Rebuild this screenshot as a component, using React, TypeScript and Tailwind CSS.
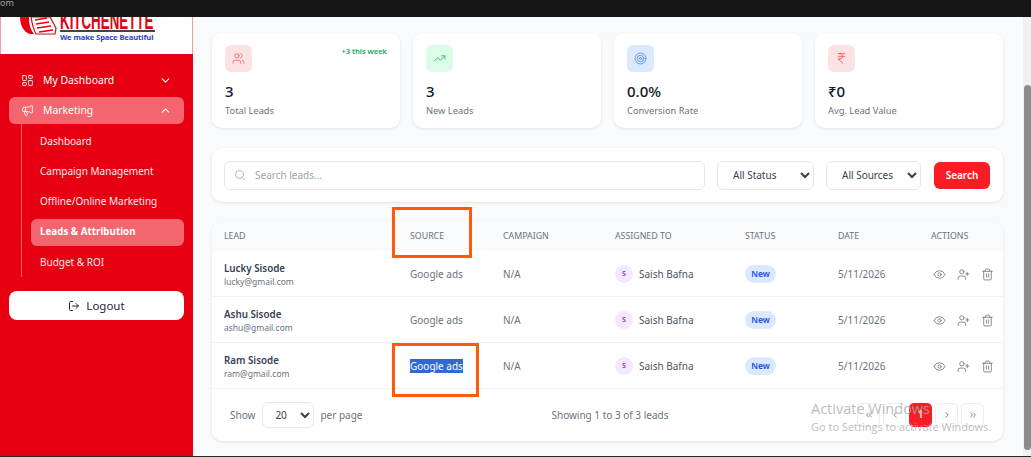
import React from 'react';
import {
  ChevronDown,
  ChevronLeft,
  ChevronRight,
  ChevronUp,
  ChevronsLeft,
  ChevronsRight,
  Eye,
  IndianRupee,
  LayoutDashboard,
  LogOut,
  Megaphone,
  Search,
  Target,
  Trash2,
  TrendingUp,
  UserPlus,
  Users,
} from 'lucide-react';

const leads = [
  { name: 'Lucky Sisode', email: 'lucky@gmail.com' },
  { name: 'Ashu Sisode', email: 'ashu@gmail.com' },
  { name: 'Ram Sisode', email: 'ram@gmail.com', selected: true },
];

const subItems = ['Dashboard', 'Campaign Management', 'Offline/Online Marketing', 'Leads & Attribution', 'Budget & ROI'];

const columns = 'grid grid-cols-[186px_93px_112px_130px_93px_93px_1fr] px-[12px]';

const Logo = () => (
  <div className="h-[37px] bg-white border-x border-[#e9a0a5] overflow-hidden relative">
    <svg width="38" height="18" viewBox="0 0 38 18" className="absolute left-[18px] top-0">
      <path d="M1 0 C1 7 4 15 11 17 L15 17 C11 12 10 6 10 0 Z" fill="#e60012" />
      <path d="M12 0 L31 0 L37 11 L36 17 L17 17 C14 12 13 6 12 0 Z" fill="#fff" stroke="#e60012" strokeWidth="1.2" />
      <path d="M16 3 L28 1 M17 7 L30 5 M18 11 L32 9 M20 15 L34 13" stroke="#e60012" strokeWidth="1.4" />
    </svg>
    <div className="absolute left-[59px] top-[-10px] w-[95px]">
      <span className="block origin-left scale-x-[.58] text-[23px] leading-[29px] font-bold text-[#e60012] whitespace-nowrap font-['Liberation_Sans',sans-serif]">
        KITCHENETTE
      </span>
    </div>
    <div className="absolute left-[59px] top-[13px] w-[95px] h-[2px] bg-[#444]" />
    <div className="absolute left-[59px] top-[14px] text-[7.6px] leading-[12px] font-bold text-[#2b3fc4] whitespace-nowrap tracking-[-0.1px]">
      We make Space Beautiful
    </div>
  </div>
);

const Sidebar = () => (
  <aside className="w-[193px] shrink-0 bg-[#e60012] text-white overflow-hidden">
    <Logo />
    <div className="px-[9px] pt-[10px]">
      <div className="h-[33px] flex items-center pl-[12px] pr-[12px] text-[10.4px]">
        <LayoutDashboard className="w-[13px] h-[13px] mr-[9px]" strokeWidth={1.6} />
        <span className="flex-1">My Dashboard</span>
        <ChevronDown className="w-[13px] h-[13px]" />
      </div>
      <div className="h-[27px] flex items-center pl-[12px] pr-[12px] text-[10.4px] bg-[#f3666f] rounded-[6px]">
        <Megaphone className="w-[13px] h-[13px] mr-[9px]" strokeWidth={1.6} />
        <span className="flex-1">Marketing</span>
        <ChevronUp className="w-[13px] h-[13px]" />
      </div>
      <div className="ml-[12px] border-l border-[#f3666f] pl-[9px]">
        <div className="flex flex-col pt-[2px]">
          {subItems.map((item) => (
            <div
              key={item}
              className={
                item === 'Leads & Attribution'
                  ? 'h-[27px] mt-[2.5px] mb-[1.5px] flex items-center pl-[9px] rounded-[6px] bg-[#f3666f] text-[9.8px] font-bold'
                  : 'h-[30px] flex items-center pl-[9px] text-[10px] text-[#ffe9ea]'
              }
            >
              {item}
            </div>
          ))}
        </div>
      </div>
      <button className="mt-[14px] w-[175px] h-[29px] rounded-[8px] bg-white text-[#1f2937] text-[11.5px] flex items-center justify-center gap-[6px]">
        <LogOut className="w-[12px] h-[12px]" />
        Logout
      </button>
    </div>
  </aside>
);

const StatCard = ({
  icon,
  tint,
  value,
  label,
  note,
}: {
  icon: React.ReactNode;
  tint: string;
  value: string;
  label: string;
  note?: string;
}) => (
  <div className="h-[95px] bg-white rounded-[10px] shadow-[0_1px_3px_rgba(0,0,0,0.1)] pl-[13px] pr-[13px] pt-[12px]">
    <div className="flex justify-between items-start">
      <div className={`w-[27px] h-[27px] rounded-[6px] flex items-center justify-center ${tint}`}>{icon}</div>
      {note && <span className="text-[7.5px] leading-[12px] font-semibold text-[#22a35b]">{note}</span>}
    </div>
    <div className="mt-[9px] text-[15px] leading-[20px] font-medium text-[#111827]">{value}</div>
    <div className="text-[9.3px] leading-[14px] mt-[3px] text-[#6b7280]">{label}</div>
  </div>
);

const Pager = ({ children, active }: { children: React.ReactNode; active?: boolean }) => (
  <div
    className={
      active
        ? 'w-[23px] h-[24px] rounded-[5px] bg-[#fb1c24] text-white text-[10px] font-semibold flex items-center justify-center'
        : 'w-[23px] h-[24px] rounded-[5px] border border-[#eceef1] text-[#6b7280] flex items-center justify-center'
    }
  >
    {children}
  </div>
);

const selectClass =
  'h-[29px] rounded-[6px] border border-[#e5e7eb] bg-white text-[10px] text-[#374151] pl-[11px] outline-none';

export default function App() {
  return (
    <div className="h-screen w-full flex flex-col overflow-hidden bg-[#161616] font-['Noto_Sans',sans-serif]">
      <div className="h-[17px] shrink-0 text-[#9ca3af] text-[9px] leading-[6px]">om</div>
      <div className="flex-1 flex min-h-0">
        <Sidebar />
        <main className="flex-1 bg-[#f8fafc] pl-[19px] pr-[20px] pt-[16px] overflow-hidden">
          <div className="grid grid-cols-4 gap-[13px]">
            <StatCard
              icon={<Users className="w-[13px] h-[13px] text-[#e2626a]" strokeWidth={1.5} />}
              tint="bg-[#fde2e3]"
              value="3"
              label="Total Leads"
              note="+3 this week"
            />
            <StatCard
              icon={<TrendingUp className="w-[13px] h-[13px] text-[#22b35f]" strokeWidth={1.5} />}
              tint="bg-[#dcfce7]"
              value="3"
              label="New Leads"
            />
            <StatCard
              icon={<Target className="w-[13px] h-[13px] text-[#4f8ae8]" strokeWidth={1.5} />}
              tint="bg-[#dbe9fe]"
              value="0.0%"
              label="Conversion Rate"
            />
            <StatCard
              icon={<IndianRupee className="w-[13px] h-[13px] text-[#e8505a]" strokeWidth={1.5} />}
              tint="bg-[#fde2e3]"
              value="₹0"
              label="Avg. Lead Value"
            />
          </div>

          <div className="mt-[20px] h-[54px] bg-white rounded-[10px] shadow-[0_1px_3px_rgba(0,0,0,0.1)] flex items-center pl-[12px] pr-[13px]">
            <div className="w-[481px] h-[29px] rounded-[6px] border border-[#e5e7eb] flex items-center pl-[9px] text-[10px] text-[#9ca3af]">
              <Search className="w-[12px] h-[12px] mr-[9px]" strokeWidth={1.6} />
              Search leads...
            </div>
            <select className={`${selectClass} w-[97px] ml-[12px]`} defaultValue="All Status">
              <option>All Status</option>
            </select>
            <select className={`${selectClass} w-[95px] ml-[12px]`} defaultValue="All Sources">
              <option>All Sources</option>
            </select>
            <button className="ml-[13px] w-[56px] h-[27px] rounded-[6px] bg-[#fb1c24] text-white text-[10px] font-semibold">
              Search
            </button>
          </div>

          <div className="mt-[19px] h-[220px] bg-white rounded-[10px] shadow-[0_1px_3px_rgba(0,0,0,0.1)] overflow-hidden">
            <div className={`${columns} h-[30px] items-center bg-[#f8fafb] text-[8.8px] text-[#6b7280] pt-[2px]`}>
              <span>LEAD</span>
              <span>SOURCE</span>
              <span>CAMPAIGN</span>
              <span>ASSIGNED TO</span>
              <span>STATUS</span>
              <span>DATE</span>
              <span>ACTIONS</span>
            </div>
            {leads.map((lead) => (
              <div key={lead.email} className={`${columns} h-[46px] items-center border-b border-[#f1f3f5] pt-[1px]`}>
                <div>
                  <div className="text-[9.8px] leading-[14px] mt-[1px] font-semibold text-[#374151]">{lead.name}</div>
                  <div className="text-[8.5px] leading-[13px] mt-[-1px] text-[#6b7280]">{lead.email}</div>
                </div>
                <div className="text-[10px] text-[#6b7280]">
                  <span className={lead.selected ? 'bg-[#3367d1] text-white' : ''}>Google ads</span>
                </div>
                <div className="text-[10px] text-[#6b7280]">N/A</div>
                <div className="flex items-center text-[10px] text-[#4b5563]">
                  <span className="w-[18px] h-[18px] rounded-full bg-[#f3e8ff] text-[#7e22ce] text-[7px] font-semibold flex items-center justify-center mr-[6px]">
                    S
                  </span>
                  Saish Bafna
                </div>
                <div className="flex items-center">
                  <span className="inline-flex items-center justify-center w-[31px] h-[18px] rounded-full bg-[#dbe9fe] text-[#1d4ed8] text-[8.5px] font-semibold">
                    New
                  </span>
                </div>
                <div className="text-[10px] text-[#6b7280]">5/11/2026</div>
                <div className="flex items-center gap-[11px] pl-[2px] text-[#6b7280]">
                  <Eye className="w-[13px] h-[13px]" strokeWidth={1.5} />
                  <UserPlus className="w-[13px] h-[13px]" strokeWidth={1.5} />
                  <Trash2 className="w-[13px] h-[13px]" strokeWidth={1.5} />
                </div>
              </div>
            ))}
            <div className="h-[52px] flex items-center pl-[18px] pr-[19px] text-[10px] text-[#6b7280]">
              <span>Show</span>
              <select className="ml-[7px] w-[52px] h-[26px] rounded-[6px] border border-[#e5e7eb] bg-white text-[10px] text-[#374151] pl-[8px] outline-none" defaultValue="20">
                <option>20</option>
              </select>
              <span className="ml-[6px]">per page</span>
              <span className="ml-[189px]">Showing 1 to 3 of 3 leads</span>
              <div className="ml-auto flex gap-[3px] mt-[-1px]">
                <Pager><ChevronsLeft className="w-[10px] h-[10px]" /></Pager>
                <Pager><ChevronLeft className="w-[10px] h-[10px]" /></Pager>
                <Pager active>1</Pager>
                <Pager><ChevronRight className="w-[10px] h-[10px]" /></Pager>
                <Pager><ChevronsRight className="w-[10px] h-[10px]" /></Pager>
              </div>
            </div>
          </div>
        </main>
        <div className="w-[8px] shrink-0 bg-[#f1f1f1] flex flex-col items-center">
          <div className="mt-[68px] w-[7px] flex-1 mb-[6px] rounded-full bg-[#8c8c8c]" />
        </div>
      </div>
      <div className="h-[1px] shrink-0 bg-[#2a2a2a]" />

      {/* orange annotation boxes drawn on the screenshot */}
      <div className="absolute left-[392px] top-[207px] w-[80px] h-[51px] border-[3px] border-[#ff5a0a]" />
      <div className="absolute left-[392px] top-[343px] w-[87px] h-[54px] border-[3px] border-[#ff5a0a]" />

      {/* windows watermark */}
      <div className="absolute left-[811px] top-[400px] text-[#a8abb0]/80 pointer-events-none font-['Open_Sans',sans-serif] whitespace-nowrap">
        <div className="text-[14.5px] leading-[18px]">Activate Windows</div>
        <div className="text-[11px] leading-[15px] mt-[1px]">Go to Settings to activate Windows.</div>
      </div>
    </div>
  );
}
